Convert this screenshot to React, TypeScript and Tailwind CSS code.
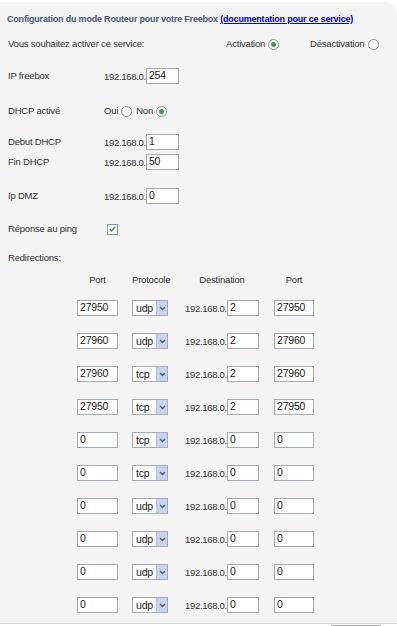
import React from 'react';

const redirections = [
  { port: '27950', proto: 'udp', dest: '2', port2: '27950' },
  { port: '27960', proto: 'udp', dest: '2', port2: '27960' },
  { port: '27960', proto: 'tcp', dest: '2', port2: '27960' },
  { port: '27950', proto: 'tcp', dest: '2', port2: '27950' },
  { port: '0', proto: 'tcp', dest: '0', port2: '0' },
  { port: '0', proto: 'tcp', dest: '0', port2: '0' },
  { port: '0', proto: 'udp', dest: '0', port2: '0' },
  { port: '0', proto: 'udp', dest: '0', port2: '0' },
  { port: '0', proto: 'udp', dest: '0', port2: '0' },
  { port: '0', proto: 'udp', dest: '0', port2: '0' },
];

function Radio({ checked }: { checked?: boolean }) {
  return (
    <span className="inline-flex items-center justify-center w-[11px] h-[11px] rounded-full border border-[#8a96a8] bg-white">
      {checked && <span className="w-[5px] h-[5px] rounded-full bg-[#3d9a3d]" />}
    </span>
  );
}

function TextBox({ value, width }: { value: string; width: string }) {
  return (
    <div className={`${width} h-[16px] border border-[#a5acb2] bg-white pl-[2px] text-[10.5px] leading-[12px] tracking-[-0.2px] text-[#222]`}>
      {value}
    </div>
  );
}

function Select({ value }: { value: string }) {
  return (
    <div className="w-[36px] h-[16px] border border-[#a5acb2] bg-white flex">
      <span className="flex-1 pl-[3px] text-[10.5px] leading-[14px] text-[#222]">{value}</span>
      <span className="w-[11px] h-full bg-[#c6d4f0] border-l border-[#b3c2e2] flex items-center justify-center">
        <svg width="7" height="5" viewBox="0 0 7 5">
          <path d="M1 1 L3.5 3.5 L6 1" stroke="#4d6185" strokeWidth="1.4" fill="none" />
        </svg>
      </span>
    </div>
  );
}

function Ip() {
  return <span className="whitespace-nowrap pt-[3px] tracking-[-0.3px]">192.168.0.</span>;
}

export default function App() {
  return (
    <div className="w-[397px] h-[626px] bg-white overflow-hidden text-[9.5px] tracking-[-0.2px] text-[#333]" style={{ fontFamily: '"Liberation Sans", Arial, sans-serif' }}>
      <div className="mt-[2px] bg-[#f4f4f4] rounded-tr-[12px] border-b border-[#d8d8d8] pl-[8px] pt-[10px] pb-[10px]">
        <div className="h-[16px] flex items-center whitespace-nowrap text-[9px] font-bold text-[#4a5878] -ml-[1px]">
          Configuration du mode Routeur pour votre Freebox&nbsp;
          <span className="text-[#0000cc] underline">(documentation pour ce service)</span>
        </div>

        <div className="mt-[8px] h-[16px] flex items-center">
          <span className="w-[218px]">Vous souhaitez activer ce service:</span>
          <span className="w-[42px]">Activation</span>
          <Radio checked />
          <span className="ml-[31px] w-[58px]">Désactivation</span>
          <Radio />
        </div>

        <div className="mt-[16px] h-[16px] flex items-center">
          <span className="w-[96px]">IP freebox</span>
          <Ip />
          <TextBox value="254" width="w-[33px]" />
        </div>

        <div className="mt-[19px] h-[16px] flex items-center">
          <span className="w-[96px]">DHCP activé</span>
          <span>Oui</span>
          <span className="ml-[3px] flex"><Radio /></span>
          <span className="ml-[4px]">Non</span>
          <span className="ml-[3px] flex"><Radio checked /></span>
        </div>

        <div className="mt-[15px] h-[16px] flex items-center">
          <span className="w-[96px]">Debut DHCP</span>
          <Ip />
          <TextBox value="1" width="w-[33px]" />
        </div>

        <div className="mt-[4px] h-[16px] flex items-center">
          <span className="w-[96px]">Fin DHCP</span>
          <Ip />
          <TextBox value="50" width="w-[33px]" />
        </div>

        <div className="mt-[18px] h-[16px] flex items-center">
          <span className="w-[96px]">Ip DMZ</span>
          <Ip />
          <TextBox value="0" width="w-[33px]" />
        </div>

        <div className="mt-[17px] h-[16px] flex items-center">
          <span className="w-[99px]">Réponse au ping</span>
          <span className="w-[11px] h-[11px] border border-[#8a96a8] bg-white flex items-center justify-center">
            <svg width="7" height="6" viewBox="0 0 7 6">
              <path d="M0.8 3 L2.7 4.8 L6.2 1" stroke="#2f9a2f" strokeWidth="1.5" fill="none" />
            </svg>
          </span>
        </div>

        <div className="mt-[13px] h-[16px] flex items-center">Redirections:</div>

        <div className="mt-[6px] h-[16px] flex items-center">
          <span className="ml-[69px] w-[41px] text-center">Port</span>
          <span className="ml-[14px] w-[36px] text-center">Protocole</span>
          <span className="ml-[17px] w-[74px] text-center">Destination</span>
          <span className="ml-[15px] w-[40px] text-center">Port</span>
        </div>

        <div className="mt-[12px] flex flex-col gap-[17px]">
          {redirections.map((r, i) => (
            <div key={i} className="h-[16px] flex items-center">
              <div className="ml-[69px]"><TextBox value={r.port} width="w-[41px]" /></div>
              <div className="ml-[14px]"><Select value={r.proto} /></div>
              <div className="ml-[17px] w-[74px] flex items-center">
                <Ip />
                <TextBox value={r.dest} width="w-[32px]" />
              </div>
              <div className="ml-[15px]"><TextBox value={r.port2} width="w-[40px]" /></div>
            </div>
          ))}
        </div>
      </div>
      <div className="ml-[330px] mt-[1px] w-[52px] h-[6px] border border-[#aaa] rounded-t-[2px] bg-[#e8e8e8]" />
    </div>
  );
}
